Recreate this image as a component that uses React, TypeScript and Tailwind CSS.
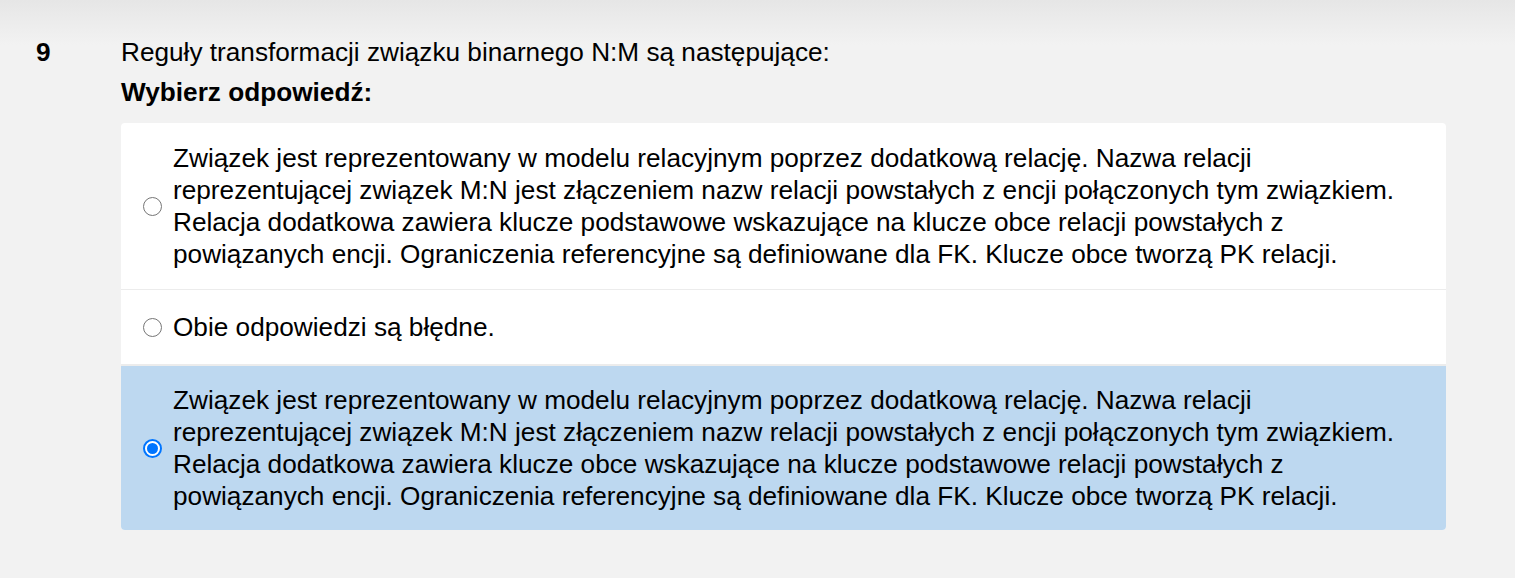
import React from "react";

const Radio = ({ checked }: { checked?: boolean }) =>
  checked ? (
    <span className="flex h-[19px] w-[19px] shrink-0 items-center justify-center rounded-full border-[2px] border-[#0075ff] bg-white">
      <span className="h-[11px] w-[11px] rounded-full bg-[#0075ff]" />
    </span>
  ) : (
    <span className="h-[19px] w-[19px] shrink-0 rounded-full border-[1.5px] border-[#767676] bg-white" />
  );

const Option = ({
  lines,
  checked,
  className,
}: {
  lines: string[];
  checked?: boolean;
  className?: string;
}) => (
  <div className={`flex items-center ${className ?? ""}`}>
    <div className="flex items-center gap-[11px] pl-[22px] pr-4">
      <Radio checked={checked} />
      <div className="whitespace-nowrap text-[26.2px] leading-[32px] text-black">
        {lines.map((l, i) => (
          <React.Fragment key={i}>
            {l}
            {i < lines.length - 1 && <br />}
          </React.Fragment>
        ))}
      </div>
    </div>
  </div>
);

export default function App() {
  return (
    <div
      className="min-h-[578px] w-full bg-[linear-gradient(to_bottom,#e6e6e6_0px,#f2f2f2_45px)] pt-[36px] pb-10"
      style={{ fontFamily: '"Liberation Sans", Arial, sans-serif' }}
    >
      <div className="flex pr-[69px]">
        <div className="w-[121px] shrink-0 pl-[36px] text-[26.2px] font-bold leading-[32px] text-black">
          9
        </div>
        <div className="flex-1">
          <div className="text-[26.2px] leading-[32px] text-black">
            Reguły transformacji związku binarnego N:M są następujące:
          </div>
          <div className="mt-[8px] text-[26.2px] font-bold leading-[32px] text-black">
            Wybierz odpowiedź:
          </div>
          <div className="mt-[15px] overflow-hidden rounded-[4px] bg-white">
            <Option
              className="py-[19px]"
              lines={[
                "Związek jest reprezentowany w modelu relacyjnym poprzez dodatkową relację. Nazwa relacji",
                "reprezentującej związek M:N jest złączeniem nazw relacji powstałych z encji połączonych tym związkiem.",
                "Relacja dodatkowa zawiera klucze podstawowe wskazujące na klucze obce relacji powstałych z",
                "powiązanych encji. Ograniczenia referencyjne są definiowane dla FK. Klucze obce tworzą PK relacji.",
              ]}
            />
            <Option
              className="border-t border-[#ececec] py-[21px]"
              lines={["Obie odpowiedzi są błędne."]}
            />
            <Option
              checked
              className="border-t-2 border-[#ececec] bg-[#bdd8f0] py-[18px]"
              lines={[
                "Związek jest reprezentowany w modelu relacyjnym poprzez dodatkową relację. Nazwa relacji",
                "reprezentującej związek M:N jest złączeniem nazw relacji powstałych z encji połączonych tym związkiem.",
                "Relacja dodatkowa zawiera klucze obce wskazujące na klucze podstawowe relacji powstałych z",
                "powiązanych encji. Ograniczenia referencyjne są definiowane dla FK. Klucze obce tworzą PK relacji.",
              ]}
            />
          </div>
        </div>
      </div>
    </div>
  );
}
